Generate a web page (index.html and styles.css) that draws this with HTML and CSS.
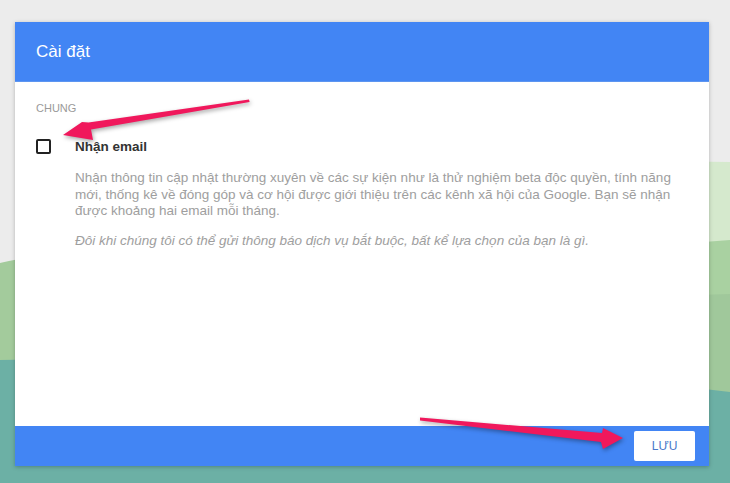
FILE: index.html
```html
<!DOCTYPE html>
<html lang="vi">
<head>
    <meta charset="UTF-8">
    <meta name="viewport" content="width=device-width, initial-scale=1.0">
    <title>Cài đặt</title>
    <link rel="stylesheet" href="styles.css">
</head>
<body>
    <!-- phong cảnh đồi phía sau hộp thoại -->
    <svg class="scenery" viewBox="0 0 730 483" preserveAspectRatio="none">
        <rect width="730" height="483" fill="#ececec"/>
        <path d="M520 180 Q620 160 730 162 V483 H520 Z" fill="#d5e9cd"/>
        <path d="M540 262 Q640 246 730 240 V483 H540 Z" fill="#a9d1a1"/>
        <path d="M560 300 Q650 296 730 294 V483 H560 Z" fill="#a0c89b"/>
        <path d="M0 263 Q30 256 80 250 V483 H0 Z" fill="#a3cb9c"/>
        <path d="M0 360 Q400 352 730 392 V483 H0 Z" fill="#6cb0a5"/>
    </svg>

    <div class="dialog">
        <div class="dialog-header">Cài đặt</div>

        <div class="dialog-body">
            <div class="section-title">CHUNG</div>

            <label class="option">
                <span class="checkbox"></span>
                <span class="option-label">Nhận email</span>
            </label>

            <div class="option-desc">
                <p>Nhận thông tin cập nhật thường xuyên về các sự kiện như là thử nghiệm beta độc quyền, tính năng mới, thống kê về đóng góp và cơ hội được giới thiệu trên các kênh xã hội của Google. Bạn sẽ nhận được khoảng hai email mỗi tháng.</p>
                <p class="note">Đôi khi chúng tôi có thể gửi thông báo dịch vụ bắt buộc, bất kể lựa chọn của bạn là gì.</p>
            </div>
        </div>

        <div class="dialog-footer">
            <button class="save-btn">LƯU</button>
        </div>
    </div>

    <!-- mũi tên chú thích -->
    <svg class="arrows" viewBox="0 0 730 483">
        <polygon points="249,99.5 249.6,102 91,129.5 93,140 63,135 82,122 88.5,122.5" fill="#f0185c"/>
        <polygon points="420,417.5 420,420.5 601,442 603,449 623,438 603,428 602,433" fill="#f0185c"/>
    </svg>
</body>
</html>
```

FILE: styles.css
```css
body {
    margin: 0;
    font-family: 'Liberation Sans', Arial, sans-serif;
    width: 730px;
    height: 483px;
    overflow: hidden;
    position: relative;
    padding-top: 22px;
    box-sizing: border-box;
}

.scenery {
    position: absolute;
    top: 0;
    left: 0;
    width: 730px;
    height: 483px;
    z-index: -1;
}

.dialog {
    margin-left: 15px;
    width: 694px;
    height: 444px;
    display: flex;
    flex-direction: column;
    background: #fff;
    box-shadow: 0 1px 4px rgba(0, 0, 0, 0.25);
}

.dialog-header {
    height: 59px;
    border-bottom: 1px solid #5d95f0;
    background: #4285f4;
    color: #fff;
    font-size: 17px;
    padding-left: 21px;
    display: flex;
    align-items: center;
}

.dialog-body {
    flex: 1;
    padding: 20px 24px 0 21px;
}

.section-title {
    font-size: 11px;
    color: #9a9a9a;
    line-height: 13px;
}

.option {
    display: flex;
    align-items: center;
    margin-top: 23px;
    height: 16px;
}

.checkbox {
    width: 11px;
    height: 11px;
    border: 2px solid #222;
    border-radius: 2px;
}

.option-label {
    margin-left: 24px;
    font-size: 13.5px;
    font-weight: bold;
    color: #333;
}

.option-desc {
    margin-left: 39px;
    margin-top: 16px;
    font-size: 13.5px;
    line-height: 16.5px;
    color: #9e9e9e;
}

.option-desc p {
    margin: 0;
}

.option-desc .note {
    margin-top: 13px;
    font-style: italic;
}

.dialog-footer {
    height: 40px;
    background: #4285f4;
    display: flex;
    align-items: center;
    justify-content: flex-end;
    padding-right: 14px;
}

.save-btn {
    width: 61px;
    height: 30px;
    background: #fff;
    border: none;
    border-radius: 2px;
    color: #4a78c9;
    font-family: 'Liberation Sans', Arial, sans-serif;
    font-size: 12px;
    padding: 0;
    cursor: pointer;
}

.arrows {
    position: absolute;
    top: 0;
    left: 0;
    width: 730px;
    height: 483px;
    filter: drop-shadow(1px 2px 2px rgba(0, 0, 0, 0.35));
    pointer-events: none;
}
```
